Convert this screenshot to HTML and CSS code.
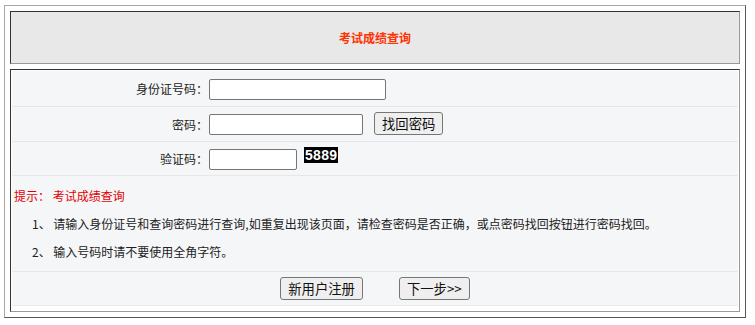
FILE: index.html
```html
<!DOCTYPE html>
<html lang="zh-CN">
<head>
<meta charset="utf-8">
<title>考试成绩查询</title>
<link rel="stylesheet" href="styles.css">
</head>
<body>
<table class="frame">
  <tr>
    <td class="cell head">考试成绩查询</td>
  </tr>
  <tr>
    <td class="cell main">
      <table class="form">
        <tr class="row r1">
          <td class="label">身份证号码：</td>
          <td class="field"><input class="input w-id" type="text"></td>
        </tr>
        <tr class="row r2">
          <td class="label">密码：</td>
          <td class="field"><div class="line"><input class="input w-pw" type="password"><button class="btn">找回密码</button></div></td>
        </tr>
        <tr class="row r3">
          <td class="label">验证码：</td>
          <td class="field"><div class="line"><input class="input w-code" type="text"><span class="captcha">5889</span></div></td>
        </tr>
        <tr class="row">
          <td class="tips" colspan="2">
            <div class="tip">提示： 考试成绩查询</div>
            <div class="note">1、 请输入身份证号和查询密码进行查询,如重复出现该页面，请检查密码是否正确，或点密码找回按钮进行密码找回。</div>
            <div class="note">2、 输入号码时请不要使用全角字符。</div>
          </td>
        </tr>
        <tr class="row last">
          <td class="actions" colspan="2">
            <div class="btns"><button class="btn">新用户注册</button><button class="btn">下一步&gt;&gt;</button></div>
          </td>
        </tr>
      </table>
    </td>
  </tr>
</table>
</body>
</html>
```
FILE: styles.css
```css
html, body {
  margin: 0;
  background: #fff;
}
body {
  padding: 5px 0 0 4px;
  font-family: "Noto Sans CJK SC", "Microsoft YaHei", sans-serif;
  font-size: 12px;
  color: #222;
}
.frame {
  width: 742px;
  box-sizing: border-box;
  border-collapse: separate;
  border-spacing: 5px;
  border: 1px solid;
  border-color: #a8a8a8 #555 #555 #a8a8a8;
}
.cell {
  border: 1px solid;
  border-color: #333 #999 #999 #333;
  padding: 0;
}
.head {
  height: 51px;
  background: #e8e8e8;
  text-align: center;
  color: #ff3300;
  font-weight: bold;
  font-size: 12px;
}
.main {
  padding: 1px 1px 5px 1px;
  background: #fff;
}
.form {
  width: 100%;
  border-collapse: collapse;
  background: #f5f6f8;
}
.row td {
  border-bottom: 1px solid #e6e7ea;
  padding: 0;
}
.row.last td {
  border-bottom: 1px solid #e9eaec;
}
.r1 td { height: 35px; }
.r2 td { height: 34px; }
.r3 td { height: 33px; }
.label {
  width: 196px;
  text-align: right;
  padding-right: 0;
  color: #222;
}
.field {
  padding-left: 1px !important;
}
.line {
  display: flex;
  align-items: center;
}
.input {
  box-sizing: border-box;
  height: 21px;
  border: 1px solid #767676;
  border-radius: 2px;
  background: #fff;
  padding: 1px 2px;
  margin: 0;
  display: block;
}
.w-id { width: 177px; margin-top: 2px; }
.w-pw { width: 154px; }
.w-code { width: 88px; margin-top: 2px; }
.btn {
  box-sizing: border-box;
  height: 23px;
  padding: 0 7px;
  margin: 0;
  font-family: "Noto Sans CJK SC", "Microsoft YaHei", sans-serif;
  font-size: 13.33px;
  color: #111;
  background: #efefef;
  border: 1px solid #767676;
  border-radius: 3px;
}
.line .btn {
  margin-left: 11px;
  margin-top: -2px;
}
.captcha {
  align-self: flex-start;
  margin-left: 7px;
  margin-top: 0;
  background: #000;
  color: #fff;
  font-family: "Liberation Sans", Arial, sans-serif;
  font-weight: bold;
  font-size: 14px;
  line-height: 16px;
  padding: 0 1px;
  letter-spacing: 0.3px;
}
.tips {
  padding: 6px 0 5px 0 !important;
}
.tip {
  line-height: 28px;
  padding-left: 2px;
  color: #e50000;
}
.note {
  line-height: 28px;
  padding-left: 20px;
  color: #222;
}
.actions {
  height: 33px;
}
.btns {
  display: flex;
  justify-content: center;
  gap: 36px;
}
```
